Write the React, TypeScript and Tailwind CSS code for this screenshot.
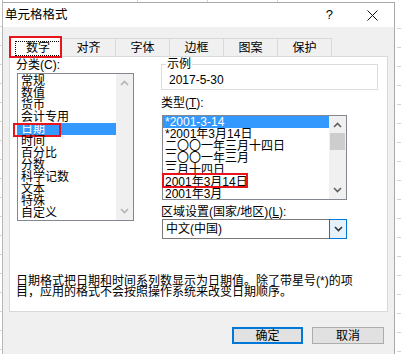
import React from "react";

const F = "font-['Liberation_Sans','Noto_Sans_CJK_SC',sans-serif]";

const Chev = ({ up, c }: { up?: boolean; c: string }) => (
  <svg width="9" height="6" viewBox="0 0 9 6">
    <polyline
      points={up ? "1,5 4.5,1.5 8,5" : "1,1 4.5,4.5 8,1"}
      fill="none"
      stroke={c}
      strokeWidth="1.6"
    />
  </svg>
);

const cats = ["常规", "数值", "货币", "会计专用", "日期", "时间", "百分比", "分数", "科学记数", "文本", "特殊", "自定义"];
const types = ["*2001-3-14", "*2001年3月14日", "二〇〇一年三月十四日", "二〇〇一年三月", "三月十四日", "2001年3月14日", "2001年3月"];
const tabs = ["对齐", "字体", "边框", "图案", "保护"];

export default function App() {
  return (
    <div className={`w-[401px] h-[354px] overflow-hidden flex bg-white text-black text-[12px] leading-[12px] ${F}`}>
      {/* left spreadsheet strip */}
      <div className="w-[3px] flex flex-col border-r border-[#b8b8b8] pt-[8px]">
        {Array.from({ length: 18 }).map((_, i) => (
          <div key={i} className="h-[19px] shrink-0 border-b border-[#d4d4d4]" />
        ))}
      </div>
      <div className="w-[392px] flex flex-col">
        <div className="h-[2px] shrink-0 flex">
          <div className="w-[135px] border-r border-[#d4d4d4]" />
          <div className="w-[70px] border-r border-[#d4d4d4]" />
          <div className="w-[70px] border-r border-[#d4d4d4]" />
        </div>
        {/* dialog */}
        <div className="flex flex-col border-t border-r border-[#a9a9a9] h-[360px] shrink-0">
          {/* title bar */}
          <div className="h-[24px] shrink-0 bg-white flex items-center">
            <span className="pl-[2px] text-[12.5px] leading-[14px]">单元格格式</span>
            <span className="ml-auto mr-[34px] text-[13px] font-['Liberation_Sans',sans-serif]">?</span>
            <svg className="mr-[16px]" width="11" height="11" viewBox="0 0 11 11">
              <line x1="0.5" y1="0.5" x2="10.5" y2="10.5" stroke="#111" strokeWidth="1" />
              <line x1="10.5" y1="0.5" x2="0.5" y2="10.5" stroke="#111" strokeWidth="1" />
            </svg>
          </div>
          {/* body */}
          <div className="flex-1 bg-[#f0f0f0] flex flex-col px-[6px] pt-[9px]">
            {/* tabs */}
            <div className="flex items-end h-[20px] shrink-0">
              <div className="relative z-10 w-[53px] h-[21px] -mb-px bg-white border border-b-0 border-[#d9d9d9] flex items-center pl-[5px] pt-[2px]">
                <span className="flex items-center justify-center w-[47px] h-[15px] border border-dotted border-black">数字</span>
                <div className="absolute -left-px -top-px -right-px -bottom-px border-2 border-[#e8141c]" />
              </div>
              {tabs.map((t) => (
                <div key={t} className="w-[54px] h-[18px] border border-b-0 border-l-0 border-[#d9d9d9] flex items-center justify-center">
                  {t}
                </div>
              ))}
            </div>
            {/* panel */}
            <div className="h-[256px] shrink-0 bg-white border border-[#d9d9d9] flex flex-col">
              <div className="flex">
                {/* left column */}
                <div className="ml-[6px] w-[125px] flex flex-col">
                  <div className="mt-[2px] h-[12px]">分类(C):</div>
                  <div className="mt-[2px] ml-px w-[117px] h-[148px] border border-[#828790] flex">
                    <div className="flex-1 flex flex-col pt-px">
                      {cats.map((c) => (
                        <div
                          key={c}
                          className={`relative h-[12px] pl-[3px] ${c === "日期" ? "bg-[#3399ff] text-white" : ""}`}
                        >
                          {c}
                          {c === "日期" && (
                            <div className="absolute left-[-5px] top-0 w-[48px] h-[14px] border-2 border-[#e8141c]" />
                          )}
                        </div>
                      ))}
                    </div>
                    <div className="w-[17px] bg-[#f0f0f0] flex flex-col items-center justify-between py-[6px]">
                      <Chev up c="#b4b4b4" />
                      <Chev c="#b4b4b4" />
                    </div>
                  </div>
                </div>
                {/* right column */}
                <div className="ml-[20px] flex flex-col">
                  <div className="mt-[7px] w-[217px] h-[26px] border border-[#dcdcdc] flex flex-col">
                    <span className="-mt-[7px] ml-[4px] px-px bg-white w-fit h-[12px]">示例</span>
                    <span className="mt-[4px] ml-[7px]">2017-5-30</span>
                  </div>
                  <div className="mt-[7px] h-[12px]">类型(<span className="underline">T</span>):</div>
                  <div className="mt-[6px] ml-px w-[185px] h-[85px] border border-[#828790] flex">
                    <div className="flex-1 flex flex-col">
                      {types.map((t, i) => (
                        <div
                          key={t}
                          className={`relative h-[12px] pl-[2px] whitespace-nowrap ${i === 0 ? "bg-[#3399ff] text-white" : ""}`}
                        >
                          {t}
                          {i === 5 && (
                            <div className="absolute left-[-1px] top-[-3px] w-[86px] h-[15px] border-2 border-[#e8141c]" />
                          )}
                        </div>
                      ))}
                    </div>
                    <div className="w-[17px] bg-[#f0f0f0] flex flex-col items-center py-[6px]">
                      <Chev up c="#606060" />
                      <div className="mt-[5px] w-[15px] h-[17px] bg-[#cdcdcd]" />
                      <div className="mt-auto">
                        <Chev c="#606060" />
                      </div>
                    </div>
                  </div>
                  <div className="mt-[6px] h-[12px] whitespace-nowrap">
                    区域设置(国家/地区)(<span className="underline">L</span>):
                  </div>
                  <div className="mt-px ml-px w-[185px] h-[20px] border border-[#7a7a7a] flex items-center">
                    <span className="pl-[3px] flex-1">中文(中国)</span>
                    <div className="w-[18px] h-[20px] -mr-px border border-[#0078d7] bg-[#e5f1fb] flex items-center justify-center">
                      <Chev c="#333" />
                    </div>
                  </div>
                </div>
              </div>
              <div className="mt-[37px] ml-[6px] leading-[11px] whitespace-nowrap">
                日期格式把日期和时间系列数显示为日期值。除了带星号(*)的项
                <br />
                目，应用的格式不会按照操作系统来改变日期顺序。
              </div>
            </div>
            {/* buttons */}
            <div className="mt-[15px] flex justify-end gap-[9px] pr-[4px]">
              <div className="w-[71px] h-[17px] border-2 border-[#0078d7] bg-[#e1e1e1] flex items-center justify-center">确定</div>
              <div className="w-[72px] h-[17px] border border-[#adadad] bg-[#e1e1e1] flex items-center justify-center">取消</div>
            </div>
          </div>
        </div>
      </div>
      {/* right spreadsheet strip */}
      <div className="flex-1 flex flex-col pt-[10px]">
        {Array.from({ length: 18 }).map((_, i) => (
          <div key={i} className="h-[19px] shrink-0 border-b border-[#d4d4d4] ml-[2px]" />
        ))}
      </div>
    </div>
  );
}
